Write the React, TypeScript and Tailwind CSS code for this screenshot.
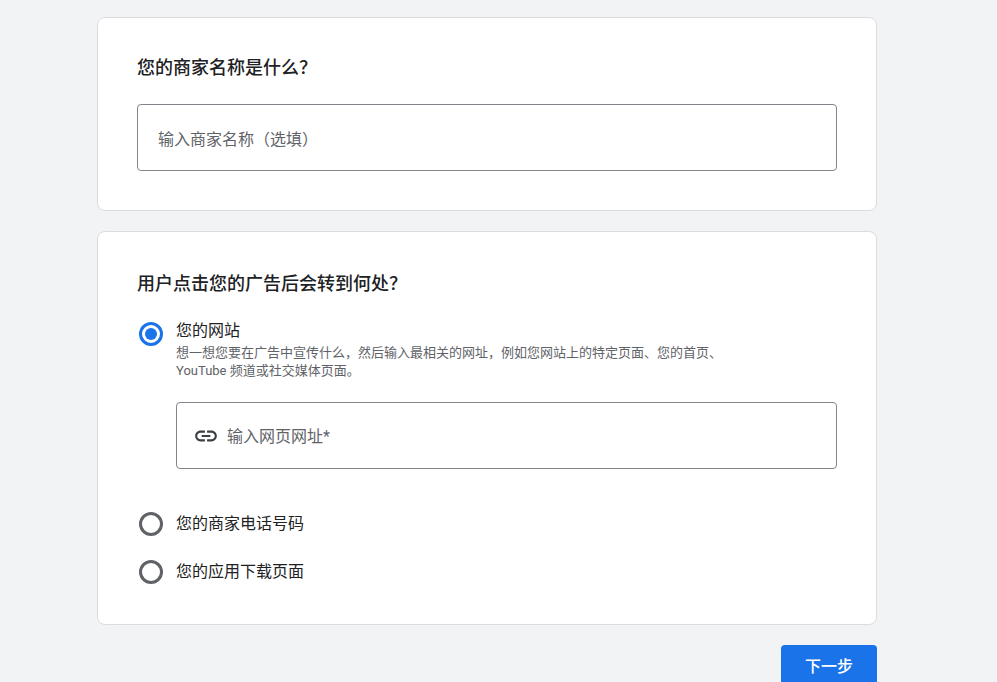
const font = { fontFamily: 'Roboto, "Noto Sans CJK SC", sans-serif' };

const Radio = ({ checked }: { checked?: boolean }) => (
  <div
    className={`w-6 h-6 rounded-full border-[3px] flex items-center justify-center shrink-0 ${
      checked ? "border-[#1a73e8]" : "border-[#5f6368]"
    }`}
  >
    {checked && <div className="w-3 h-3 rounded-full bg-[#1a73e8]" />}
  </div>
);

const LinkIcon = () => (
  <svg width="26" height="26" viewBox="0 0 24 24" className="text-[#3c4043] -mt-[3px]" fill="currentColor">
    <path d="M3.9 12c0-1.71 1.39-3.1 3.1-3.1h4V7H7c-2.76 0-5 2.24-5 5s2.24 5 5 5h4v-1.9H7c-1.71 0-3.1-1.39-3.1-3.1zM8 13h8v-2H8v2zm9-6h-4v1.9h4c1.71 0 3.1 1.39 3.1 3.1s-1.39 3.1-3.1 3.1h-4V17h4c2.76 0 5-2.24 5-5s-2.24-5-5-5z" />
  </svg>
);

export default function App() {
  return (
    <div style={font} className="min-h-screen bg-[#f1f3f4] pt-[17px] text-[#202124]">
      <div className="ml-[97px] w-[780px] flex flex-col gap-5">
        <div className="bg-white border border-[#dadce0] rounded-lg px-[39px] pt-[38px] pb-[39px]">
          <h2 className="text-[18px] font-medium leading-6">您的商家名称是什么？</h2>
          <div className="mt-[24px] h-[67px] border border-[#80868b] rounded flex items-center px-5 pt-[5px] text-[16px] text-[#5f6368]">
            输入商家名称（选填）
          </div>
        </div>

        <div className="bg-white border border-[#dadce0] rounded-lg px-[39px] pt-[40px] pb-[40px]">
          <h2 className="text-[18px] font-medium leading-6">用户点击您的广告后会转到何处？</h2>
          <div className="mt-[20px] flex gap-[13px] pl-[2px]">
            <div className="pt-[6px]"><Radio checked /></div>
            <div className="flex-1">
              <div className="text-[16px] leading-6 mt-[3px]">您的网站</div>
              <div className="text-[13px] leading-[18px] text-[#5f6368] mt-[1px]">
                想一想您要在广告中宣传什么，然后输入最相关的网址，例如您网站上的特定页面、您的首页、
                <br />
                YouTube 频道或社交媒体页面。
              </div>
              <div className="mt-[22px] h-[67px] border border-[#80868b] rounded flex items-center px-4 gap-[8px] pt-[3px] text-[16px] text-[#5f6368]">
                <LinkIcon />
                输入网页网址*
              </div>
            </div>
          </div>
          <div className="mt-[43px] flex items-center gap-[13px] pl-[2px] text-[16px]">
            <Radio />
            <span>您的商家电话号码</span>
          </div>
          <div className="mt-[24px] flex items-center gap-[13px] pl-[2px] text-[16px]">
            <Radio />
            <span>您的应用下载页面</span>
          </div>
        </div>

        <div className="flex justify-end">
          <button className="bg-[#1a73e8] text-white text-[16px] font-medium rounded w-24 h-10 pt-1">
            下一步
          </button>
        </div>
      </div>
    </div>
  );
}
